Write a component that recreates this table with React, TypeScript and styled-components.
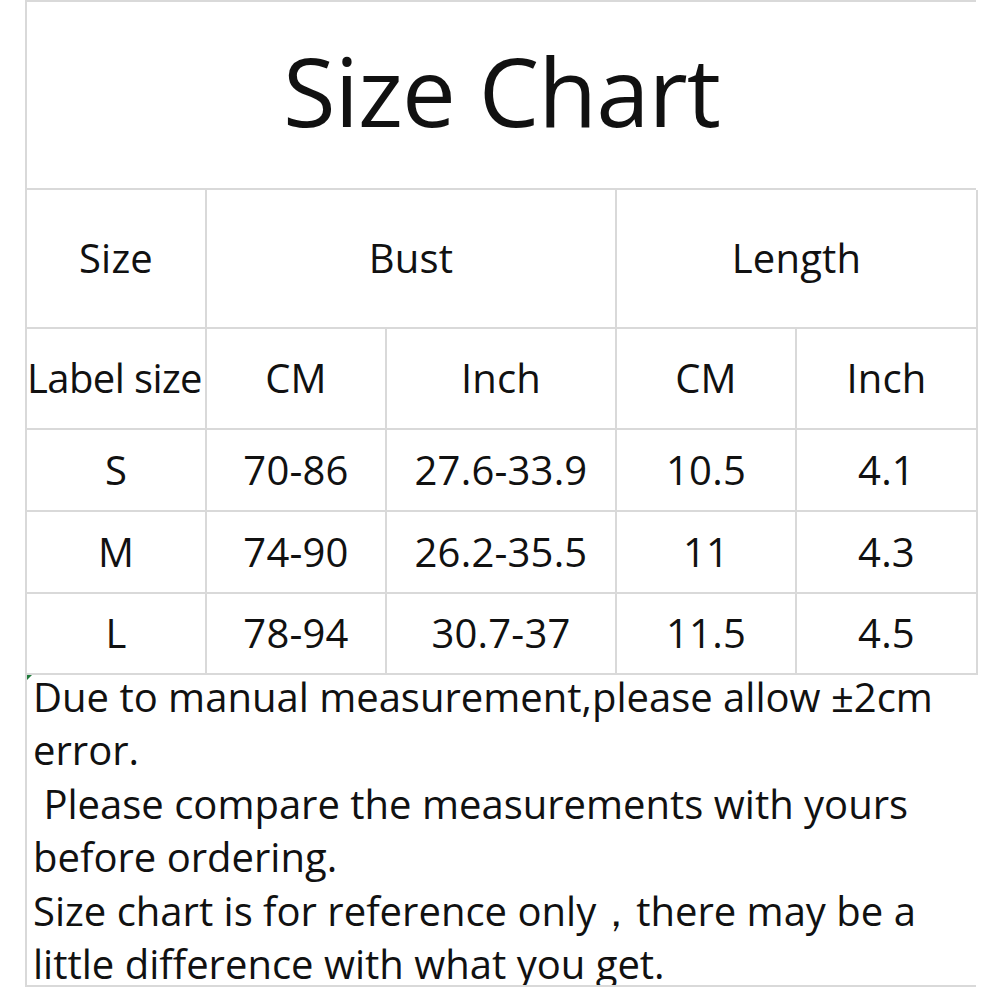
import React from "react";
import styled, { createGlobalStyle } from "styled-components";

const Global = createGlobalStyle`
  html, body { margin: 0; padding: 0; background: #ffffff; }
  body { font-family: "Open Sans", "Noto Sans", sans-serif; color: #111; }
`;

const LINE = "#d9d9d9";

const Sheet = styled.div`
  margin-left: 25px;
  width: 951px;
  display: flex;
  flex-direction: column;
`;

const TitleRow = styled.div`
  height: 186px;
  border-top: 2px solid ${LINE};
  border-left: 2px solid ${LINE};
  display: flex;
  align-items: center;
  justify-content: center;
`;

const Title = styled.h1`
  margin: 0;
  font-weight: 400;
  font-size: 96px;
  letter-spacing: -1px;
  line-height: 1;
  padding-bottom: 10px;
`;

const Grid = styled.div`
  display: grid;
  grid-template-columns: 180px 180px 230px 180px 181px;
  grid-template-rows: 139px 101px 82px 82px 81px;
  border-top: 2px solid ${LINE};
  border-left: 2px solid ${LINE};
`;

const Cell = styled.div<{ $span?: number; $left?: boolean }>`
  grid-column: span ${(p) => p.$span ?? 1};
  border-right: 2px solid ${LINE};
  border-bottom: 2px solid ${LINE};
  display: flex;
  align-items: center;
  justify-content: ${(p) => (p.$left ? "flex-start" : "center")};
  font-size: 40px;
  letter-spacing: ${(p) => (p.$left ? "-0.6px" : "0.2px")};
  white-space: nowrap;
  overflow: visible;
  padding-bottom: 2px;
`;

const Notes = styled.div`
  position: relative;
  height: 310px;
  border-left: 2px solid ${LINE};
  border-bottom: 2px solid ${LINE};
  overflow: hidden;
  padding: 0 0 0 6px;
  font-size: 40px;
  line-height: 53.4px;
  white-space: pre;
  &::before {
    content: "";
    position: absolute;
    left: 0;
    top: 0;
    width: 0;
    height: 0;
    border-top: 5px solid #1f7a3a;
    border-right: 5px solid transparent;
  }
`;

const NoteLine = styled.div`
  &:first-child { margin-top: -5px; }
`;

const rows = [
  ["S", "70-86", "27.6-33.9", "10.5", "4.1"],
  ["M", "74-90", "26.2-35.5", "11", "4.3"],
  ["L", "78-94", "30.7-37", "11.5", "4.5"],
];

const notes = [
  "Due to manual measurement,please allow ±2cm",
  "error.",
  " Please compare the measurements with yours",
  "before ordering.",
  "Size chart is for reference only，there may be a",
  "little difference with what you get.",
];

export default function App() {
  return (
    <>
      <Global />
      <Sheet>
        <TitleRow>
          <Title>Size Chart</Title>
        </TitleRow>
        <Grid>
          <Cell>Size</Cell>
          <Cell $span={2}>Bust</Cell>
          <Cell $span={2}>Length</Cell>
          <Cell $left>Label size</Cell>
          <Cell>CM</Cell>
          <Cell>Inch</Cell>
          <Cell>CM</Cell>
          <Cell>Inch</Cell>
          {rows.map((r) =>
            r.map((v, i) => <Cell key={r[0] + i}>{v}</Cell>)
          )}
        </Grid>
        <Notes>
          {notes.map((n, i) => (
            <NoteLine key={i}>{n}</NoteLine>
          ))}
        </Notes>
      </Sheet>
    </>
  );
}
